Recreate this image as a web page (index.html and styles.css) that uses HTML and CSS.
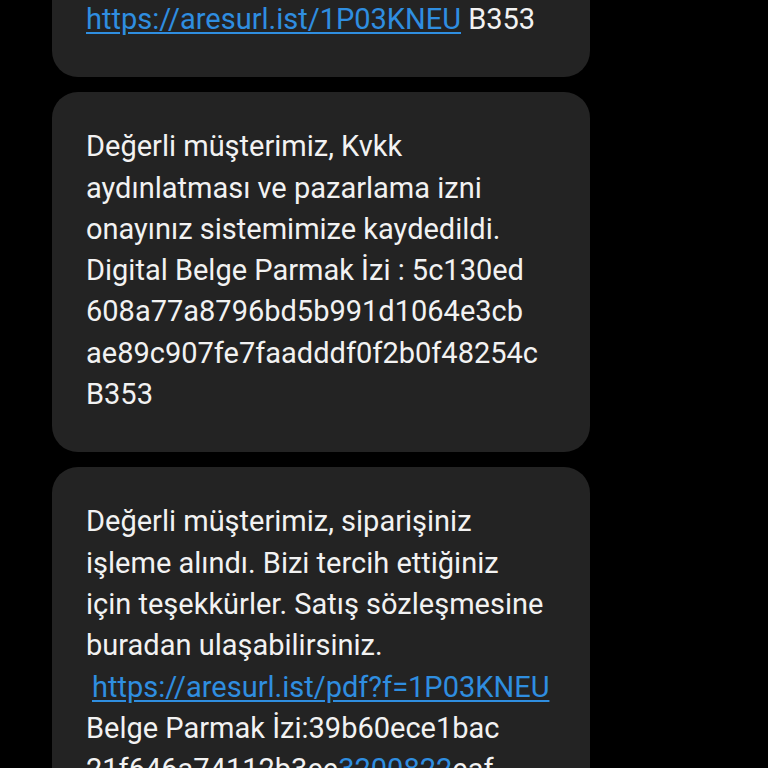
FILE: index.html
```html
<!DOCTYPE html>
<html lang="tr">
<head>
<meta charset="utf-8">
<title>Mesajlar</title>
<link rel="stylesheet" href="styles.css">
</head>
<body>
<main class="thread">
  <div class="bubble first">
    <p class="msg"><a class="link" href="#">https://aresurl.ist/1P03KNEU</a> B353</p>
  </div>
  <div class="bubble">
    <p class="msg">Değerli müşterimiz, Kvkk<br>aydınlatması ve pazarlama izni<br>onayınız sistemimize kaydedildi.<br>Digital Belge Parmak İzi : 5c130ed<br>608a77a8796bd5b991d1064e3cb<br>ae89c907fe7faadddf0f2b0f48254c<br>B353</p>
  </div>
  <div class="bubble">
    <p class="msg">Değerli müşterimiz, siparişiniz<br>işleme alındı. Bizi tercih ettiğiniz<br>için teşekkürler. Satış sözleşmesine<br>buradan ulaşabilirsiniz.<br><span class="lead"> </span><a class="link" href="#">https://aresurl.ist/pdf?f=1P03KNEU</a><br>Belge Parmak İzi:39b60ece1bac<br>21f646a74112b3ee<a class="link" href="#">3200822</a>eaf</p>
  </div>
</main>
</body>
</html>
```
FILE: styles.css
```css
html, body {
  margin: 0;
  padding: 0;
  background: #000;
}
body {
  width: 768px;
  height: 768px;
  overflow: hidden;
  font-family: Roboto, "Noto Sans", sans-serif;
}
.thread {
  display: flex;
  flex-direction: column;
  gap: 15px;
  width: 538px;
  margin: -40px 0 0 52px;
}
.bubble {
  background: #232323;
  border-radius: 26px;
  padding: 34px 20px 37px 34px;
}
.bubble.first {
  padding-top: 39px;
  padding-bottom: 37px;
}
.msg {
  margin: 0;
  color: #f2f2f2;
  font-size: 29px;
  line-height: 41.3px;
  white-space: nowrap;
}
.link {
  color: #2f8ee0;
  text-decoration: underline;
  text-underline-offset: 3px;
}
.lead {
  display: inline-block;
  width: 6px;
}
```
